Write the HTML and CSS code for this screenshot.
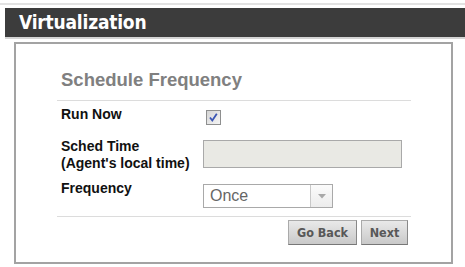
FILE: index.html
```html
<!DOCTYPE html>
<html>
<head>
    <title>Virtualization</title>
    <link rel="stylesheet" href="styles.css">
</head>
<body>
    <div class="topline"></div>
    <header class="titlebar">Virtualization</header>

    <div class="panel">
        <div class="wizard">
            <h2 class="step-title">Schedule Frequency</h2>

            <div class="fields">
                <div class="row row-run">
                    <label class="field-label">Run Now</label>
                    <span class="checkbox">
                        <svg width="15" height="15" viewBox="0 0 15 15">
                            <defs>
                                <linearGradient id="cbg" x1="0" y1="0" x2="1" y2="1">
                                    <stop offset="0" stop-color="#d4d4d4"/>
                                    <stop offset="1" stop-color="#f6f6f6"/>
                                </linearGradient>
                            </defs>
                            <rect x="0.5" y="0.5" width="14" height="14" fill="url(#cbg)" stroke="#8e8f8f"/>
                            <path d="M4 7.5 L6.3 10.5 L10.8 3.8" fill="none" stroke="#3a55b4" stroke-width="1.8"/>
                        </svg>
                    </span>
                </div>

                <div class="row row-time">
                    <label class="field-label">Sched Time<br>(Agent's local time)</label>
                    <input class="text-input" type="text" disabled>
                </div>

                <div class="row row-freq">
                    <label class="field-label">Frequency</label>
                    <div class="select">
                        <span class="select-value">Once</span>
                        <span class="select-arrow">
                            <svg width="8" height="5" viewBox="0 0 8 5"><path d="M0 0 H8 L4 4.5 Z" fill="#a8a8a8"/></svg>
                        </span>
                    </div>
                </div>
            </div>

            <div class="actions">
                <button class="btn btn-back">Go Back</button>
                <button class="btn btn-next">Next</button>
            </div>
        </div>
    </div>
</body>
</html>
```

FILE: styles.css
```css
body {
    margin: 0;
    font-family: 'Liberation Sans', Arial, sans-serif;
    background: white;
}
.topline {
    margin-top: 3px;
    height: 2px;
    background-color: #e2e2e2;
}
.titlebar {
    margin: 3px 0 0 5px;
    height: 29px;
    padding-left: 14px;
    background-color: #3c3c3c;
    border-bottom: 2px solid #d4d4d4;
    color: white;
    font-family: 'DejaVu Sans', Verdana, sans-serif;
    font-stretch: condensed;
    font-weight: bold;
    font-size: 19px;
    letter-spacing: -0.2px;
    line-height: 29px;
}
.panel {
    margin: 3px 0 0 14px;
    width: 435px;
    height: 218px;
    border: 2px solid #a3a3a3;
}
.wizard {
    padding: 25px 40px 0 41px;
}
.step-title {
    margin: 0;
    padding: 0 0 9px 4px;
    color: #808080;
    font-size: 18.5px;
    line-height: 22px;
    font-weight: bold;
    border-bottom: 1px solid #dcdcdc;
}
.fields {
    padding: 5px 0 0 4px;
}
.row {
    display: flex;
    align-items: flex-start;
}
.row-time {
    margin-top: 13px;
}
.row-freq {
    margin-top: 8px;
}
.field-label {
    width: 142px;
    color: #111;
    font-size: 14px;
    line-height: 17px;
    font-weight: bold;
}
.checkbox {
    margin: 4px 0 0 3px;
    height: 15px;
}
.checkbox svg {
    display: block;
}
.text-input {
    margin: 2px 0 0 0;
    width: 199px;
    height: 28px;
    box-sizing: border-box;
    border: 1px solid #a9a9a9;
    background-color: #e9e9e4;
    padding: 0;
}
.select {
    margin-top: 4px;
    width: 130px;
    height: 24px;
    box-sizing: border-box;
    border: 1px solid #a9a9a9;
    display: flex;
    background: white;
}
.select-value {
    flex: 1;
    padding-left: 6px;
    color: #666;
    font-size: 16px;
    line-height: 22px;
}
.select-arrow {
    width: 21px;
    border-left: 1px solid #c8c8c8;
    background: linear-gradient(#fbfbfb, #ececec);
    display: flex;
    align-items: center;
    justify-content: center;
}
.select-arrow svg {
    display: block;
}
.actions {
    margin-top: 8px;
    border-top: 1px solid #dcdcdc;
    padding: 3px 3px 0 0;
    display: flex;
    justify-content: flex-end;
    gap: 4px;
}
.btn {
    height: 25px;
    padding: 0;
    border: 1px solid #999;
    border-color: #aaa #888 #777 #aaa;
    background: linear-gradient(#e9e9e9, #c9c9c9);
    color: #585858;
    font-family: 'DejaVu Sans', Verdana, sans-serif;
    font-stretch: condensed;
    font-weight: bold;
    font-size: 12.5px;
}
.btn-back {
    width: 69px;
}
.btn-next {
    width: 47px;
}
```
